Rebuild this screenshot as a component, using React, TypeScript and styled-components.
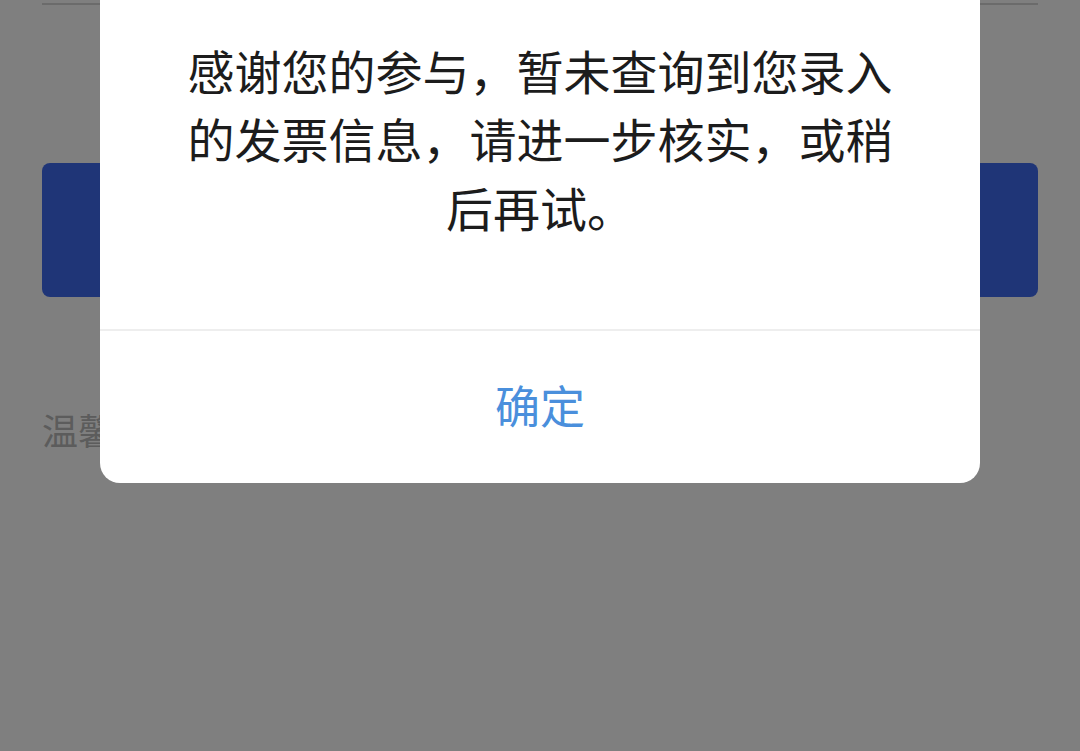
import React from 'react';
import styled, { createGlobalStyle } from 'styled-components';

const GlobalStyle = createGlobalStyle`
  html, body {
    margin: 0;
    padding: 0;
    background: #ffffff;
    font-family: "Noto Sans CJK SC", "Noto Sans", sans-serif;
  }
  * { box-sizing: border-box; }
`;

const Page = styled.div`
  width: 1080px;
  height: 751px;
  padding: 0 42px;
  display: flex;
  flex-direction: column;
  overflow: hidden;
`;

const InputLine = styled.div`
  margin-top: 3px;
  height: 2px;
  background: #d6d6d6;
`;

const SubmitButton = styled.div`
  margin-top: 158px;
  height: 134px;
  border-radius: 8px;
  background: #3f6bee;
`;

const Tip = styled.div`
  margin-top: 107px;
  font-size: 36px;
  color: #b8b8b8;
  line-height: 50px;
`;

const Overlay = styled.div`
  position: fixed;
  inset: 0;
  background: rgba(0, 0, 0, 0.5);
  display: flex;
  flex-direction: column;
  align-items: center;
  justify-content: flex-end;
  padding-bottom: 268px;
`;

const Dialog = styled.div`
  width: 880px;
  background: #ffffff;
  border-radius: 20px;
  display: flex;
  flex-direction: column;
  flex-shrink: 0;
`;

const Message = styled.p`
  margin: 0 auto;
  width: 712px;
  padding: 91px 0 88px;
  font-size: 47px;
  line-height: 68.5px;
  color: #1c1c1c;
  text-align: center;
`;

const Footer = styled.div`
  border-top: 2px solid #eeeeee;
  height: 154px;
  display: flex;
  align-items: center;
  justify-content: center;
  padding-bottom: 6px;
`;

const ConfirmButton = styled.span`
  font-size: 45px;
  color: #4a8fdc;
  cursor: pointer;
`;

export default function App() {
  return (
    <>
      <GlobalStyle />
      <Page>
        <InputLine />
        <SubmitButton />
        <Tip>温馨提示：</Tip>
      </Page>
      <Overlay>
        <Dialog>
          <Message>
            感谢您的参与，暂未查询到您录入的发票信息，请进一步核实，或稍后再试。
          </Message>
          <Footer>
            <ConfirmButton>确定</ConfirmButton>
          </Footer>
        </Dialog>
      </Overlay>
    </>
  );
}
